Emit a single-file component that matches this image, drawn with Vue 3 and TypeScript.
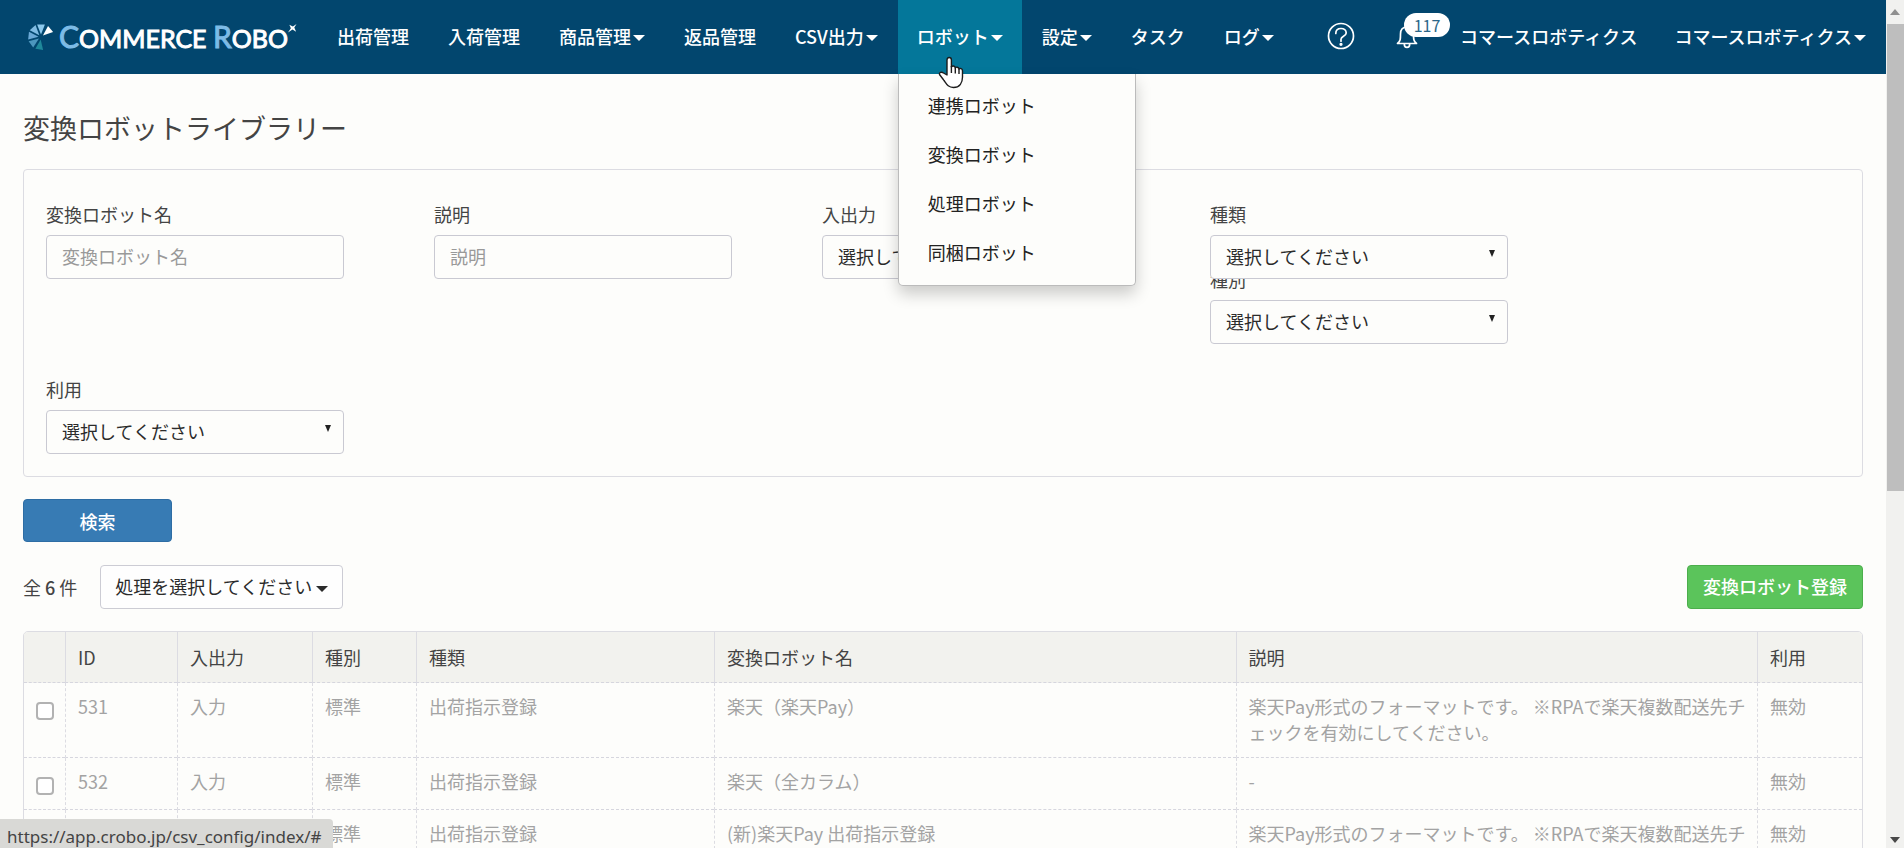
<script setup lang="ts">
interface NavItem {
  label: string
  caret?: boolean
  active?: boolean
}
interface Row {
  id: number
  io: string
  cls: string
  kind: string
  name: string
  note: string
  use: string
}

const nav: NavItem[] = [
  { label: '出荷管理' },
  { label: '入荷管理' },
  { label: '商品管理', caret: true },
  { label: '返品管理' },
  { label: 'CSV出力', caret: true },
  { label: 'ロボット', caret: true, active: true },
  { label: '設定', caret: true },
  { label: 'タスク' },
  { label: 'ログ', caret: true },
]
const menu: string[] = ['連携ロボット', '変換ロボット', '処理ロボット', '同梱ロボット']
const heads: string[] = ['ID', '入出力', '種別', '種類', '変換ロボット名', '説明', '利用']
const payNote = '楽天Pay形式のフォーマットです。 ※RPAで楽天複数配送先チェックを有効にしてください。'
const rows: Row[] = [
  { id: 531, io: '入力', cls: '標準', kind: '出荷指示登録', name: '楽天（楽天Pay）', note: payNote, use: '無効' },
  { id: 532, io: '入力', cls: '標準', kind: '出荷指示登録', name: '楽天（全カラム）', note: '-', use: '無効' },
  { id: 533, io: '入力', cls: '標準', kind: '出荷指示登録', name: '(新)楽天Pay 出荷指示登録', note: payNote, use: '無効' },
]
const petals = [
  { angle: -40, fill: '#ffffff' },
  { angle: -90, fill: '#8cc8ec' },
  { angle: -132, fill: '#7fbbe2' },
  { angle: -174, fill: '#6ba9d6' },
  { angle: -216, fill: '#4c96bd' },
  { angle: -262, fill: '#1f889a' },
]
</script>

<template>
  <div class="window" lang="ja">
    <div class="page">
      <header class="bar">
        <a class="logo" href="#" aria-label="Commerce Robo">
          <svg class="fan" viewBox="0 0 26 26" aria-hidden="true">
            <path
              v-for="p in petals"
              :key="p.angle"
              d="M2.5 0 L12.5 -3.9 L12.5 3.9 Z"
              :fill="p.fill"
              :transform="`translate(13 13) rotate(${p.angle})`"
            />
          </svg>
          <span class="word"><span class="big">C</span>OMMERCE <span class="big">R</span>OBO</span>
          <svg class="spark" viewBox="0 0 10 10" aria-hidden="true">
            <path d="M9.5 0 L7 4 L9 8.5 L5 6.2 L0 9.5 L3.2 4.6 L1.5 .8 L5.4 2.8 Z" fill="#fff" />
          </svg>
        </a>
        <nav class="nav">
          <div v-for="n in nav" :key="n.label" class="slot">
            <a class="item" :class="{ active: n.active }" href="#">{{ n.label }}<i v-if="n.caret" class="caret"></i></a>
            <div v-if="n.active" class="menu">
              <a v-for="m in menu" :key="m" href="#">{{ m }}</a>
            </div>
            <svg v-if="n.active" class="hand" viewBox="0 0 26 33" aria-hidden="true">
              <path
                d="M9 19 V4 C9 .6 13.4 .6 13.4 4 V11 C14 9.4 17 9.6 17.3 12 C18 10.6 20.8 11 21 13 C22 12 24.5 12.4 24.5 15 V21 C24.5 27 21.5 31.5 15.5 31.5 C10 31.5 8.5 28 6 24.5 C4.5 22 2.8 20.5 1.5 18.5 C.8 16.5 3.5 15.5 5.5 17 Z"
                fill="#fff"
                stroke="#1c1c1c"
                stroke-width="1.4"
                stroke-linejoin="round"
              />
              <path d="M13.4 10 V17 M17.3 12 V17.5 M21 13 V18" fill="none" stroke="#1c1c1c" stroke-width="1.4" />
            </svg>
          </div>
        </nav>
        <div class="tools">
          <a class="help" href="#" aria-label="ヘルプ">
            <svg viewBox="0 0 28 28" fill="none" stroke="#fff" stroke-width="1.7">
              <circle cx="14" cy="14" r="12.5" />
              <path d="M8.8 11.5 C8.8 8.3 11 6.5 14 6.5 C17 6.5 19.2 8.3 19.2 11 C19.2 14.2 14 14.4 14 17.2 V19.2" stroke-linecap="round" />
              <circle cx="14" cy="22.3" r=".8" fill="#fff" />
            </svg>
          </a>
          <a class="bell" href="#" aria-label="通知">
            <svg viewBox="0 0 22 26" fill="none" stroke="#fff" stroke-width="1.7">
              <path d="M1.5 20.5 H20.5 C17.5 18 17.5 16 17.5 11 C17.5 6.5 14.8 4 11 4 C7.2 4 4.5 6.5 4.5 11 C4.5 16 4.5 18 1.5 20.5 Z" stroke-linejoin="round" />
              <path d="M8.3 21 C8.3 25.6 13.7 25.6 13.7 21 M11 4 V1.5" />
            </svg>
            <span class="badge">117</span>
          </a>
          <a class="user" href="#">コマースロボティクス</a>
          <a class="user" href="#">コマースロボティクス<i class="caret"></i></a>
        </div>
      </header>

      <main class="main">
        <h1>変換ロボットライブラリー</h1>
        <form class="panel" @submit.prevent>
          <div class="col">
            <label for="f-name">変換ロボット名</label>
            <input id="f-name" type="text" placeholder="変換ロボット名" />
          </div>
          <div class="col">
            <label for="f-note">説明</label>
            <input id="f-note" type="text" placeholder="説明" />
          </div>
          <div class="col">
            <label for="f-io">入出力</label>
            <div class="pick">
              <select id="f-io"><option>選択してください</option></select>
            </div>
          </div>
          <div class="col">
            <label for="f-kind">種類</label>
            <div class="pick">
              <select id="f-kind"><option>選択してください</option></select>
            </div>
            <label class="tucked" for="f-cls">種別</label>
            <div class="pick">
              <select id="f-cls"><option>選択してください</option></select>
            </div>
          </div>
          <div class="col">
            <label for="f-use">利用</label>
            <div class="pick">
              <select id="f-use"><option>選択してください</option></select>
            </div>
          </div>
        </form>

        <button class="search" type="button">検索</button>

        <div class="actions">
          <span class="total">全 <b>6</b> 件</span>
          <button class="bulk" type="button">処理を選択してください<i class="caret"></i></button>
          <button class="add" type="button">変換ロボット登録</button>
        </div>

        <div class="frame">
          <table>
            <colgroup>
              <col class="w-check" /><col class="w-id" /><col class="w-io" /><col class="w-cls" />
              <col class="w-kind" /><col /><col /><col class="w-use" />
            </colgroup>
            <thead>
              <tr>
                <th></th>
                <th v-for="h in heads" :key="h">{{ h }}</th>
              </tr>
            </thead>
            <tbody>
              <tr v-for="r in rows" :key="r.id">
                <td class="tick"><input type="checkbox" :aria-label="`${r.id}`" /></td>
                <td>{{ r.id }}</td>
                <td>{{ r.io }}</td>
                <td>{{ r.cls }}</td>
                <td>{{ r.kind }}</td>
                <td>{{ r.name }}</td>
                <td>{{ r.note }}</td>
                <td>{{ r.use }}</td>
              </tr>
            </tbody>
          </table>
        </div>
      </main>
      <div class="status">https://app.crobo.jp/csv_config/index/#</div>
    </div>

    <div class="scroll" aria-hidden="true">
      <svg viewBox="0 0 10 6"><path d="M5 0 L10 6 H0 Z" fill="#8f8f8f" /></svg>
      <div class="thumb"></div>
      <svg viewBox="0 0 10 6"><path d="M0 0 H10 L5 6 Z" fill="#484848" /></svg>
    </div>
  </div>
</template>

<style>
body {
  margin: 0;
  overflow: hidden;
}
</style>

<style scoped>
* {
  box-sizing: border-box;
}
.window {
  display: flex;
  height: 100vh;
  overflow: hidden;
  background: #fdfdfb;
  color: #444;
  font: 18px/26px "Noto Sans CJK JP", sans-serif;
}
.page {
  position: relative;
  flex: 1;
  min-width: 0;
  overflow: hidden;
}
a {
  color: inherit;
  text-decoration: none;
}
.bar {
  display: flex;
  align-items: center;
  height: 74px;
  background: #02466e;
  color: #fff;
  font-weight: 500;
  white-space: nowrap;
}
.logo {
  display: flex;
  align-items: center;
  width: 300px;
  height: 74px;
  padding-left: 28px;
  flex: none;
}
.logo > * {
  flex: none;
}
.fan {
  width: 26px;
  height: 26px;
}
.word {
  margin-left: 5px;
  font: 25px/36px Lato, sans-serif;
  -webkit-text-stroke: 1px;
}
.big {
  color: #7dbbe6;
  font-size: 30px;
}
.spark {
  width: 9px;
  height: 9px;
  margin-bottom: 18px;
}
.nav {
  display: flex;
  gap: 1px;
  margin-left: 18px;
}
.slot {
  position: relative;
}
.item {
  display: flex;
  align-items: center;
  height: 74px;
  padding: 0 19px 2px;
}
.item.active {
  background: #04779a;
}
.caret {
  display: inline-block;
  margin: 3px 0 0 2px;
  border: 6px solid transparent;
  border-top-color: currentColor;
  border-bottom: 0;
  vertical-align: middle;
}
.menu {
  position: absolute;
  z-index: 5;
  top: 74px;
  left: 0;
  width: 238px;
  padding: 7px 0 8px;
  border: 1px solid #bbb;
  border-top: 0;
  border-radius: 0 0 5px 5px;
  background: #fdfdfb;
  box-shadow: 0 8px 16px rgba(0, 0, 0, 0.2);
  color: #222;
  font-weight: 400;
}
.menu a {
  display: block;
  padding: 0 29px;
  line-height: 49px;
}
.hand {
  position: absolute;
  z-index: 6;
  top: 56px;
  left: 40px;
  width: 26px;
  height: 33px;
}
.tools {
  display: flex;
  align-items: center;
  margin-left: auto;
  padding: 0 20px 2px 0;
}
.help,
.help svg {
  display: block;
  width: 28px;
  height: 28px;
}
.bell {
  position: relative;
  width: 22px;
  height: 26px;
  margin-left: 41px;
}
.bell svg {
  display: block;
  width: 22px;
  height: 26px;
}
.badge {
  position: absolute;
  top: -10px;
  left: 8px;
  width: 46px;
  border-radius: 12px;
  background: #fff;
  color: #2c6688;
  font-size: 16px;
  font-weight: 400;
  line-height: 24px;
  text-align: center;
}
.user {
  display: flex;
  align-items: center;
  margin-left: 37px;
}
.bell + .user {
  margin-left: 42px;
}
.main {
  padding: 34px 23px 0;
}
h1 {
  margin: 0 0 21px;
  font-size: 27px;
  font-weight: 400;
  line-height: 40px;
}
.panel {
  display: flex;
  flex-wrap: wrap;
  gap: 33px 90px;
  padding: 32px 22px 22px;
  border: 1px solid #dcdce2;
  border-radius: 4px;
}
.col {
  width: 298px;
}
label {
  display: block;
  margin-bottom: 9px;
  line-height: 24px;
}
.tucked {
  margin-top: -12px;
}
.col input,
select {
  display: block;
  width: 100%;
  height: 44px;
  padding: 0 15px 2px;
  border: 1px solid #c9c9d2;
  border-radius: 4px;
  background: #fdfdfb;
  color: #2b2b2b;
  font: inherit;
}
.col input::placeholder {
  color: #999;
}
select {
  appearance: none;
}
.pick {
  position: relative;
}
.pick::after {
  position: absolute;
  top: 15px;
  right: 13px;
  border: 3px solid transparent;
  border-top: 7px solid #222;
  border-bottom: 0;
  content: "";
  pointer-events: none;
}
button {
  border-radius: 4px;
  font: inherit;
  cursor: pointer;
}
.search {
  display: block;
  width: 149px;
  height: 43px;
  margin-top: 22px;
  border: 1px solid #2e6da4;
  background: #377bb4;
  color: #fff;
  font-weight: 500;
}
.actions {
  display: flex;
  align-items: center;
  height: 44px;
  margin-top: 23px;
}
.total b {
  font-weight: 500;
}
.bulk {
  height: 44px;
  margin-left: 23px;
  padding: 0 14px 2px;
  border: 1px solid #ccccd4;
  background: #fefefe;
  color: #2b2b2b;
}
.bulk .caret {
  margin: 0 0 0 4px;
}
.add {
  height: 44px;
  margin-left: auto;
  padding: 0 15px 2px;
  border: 1px solid #4cae4c;
  background: #5bc45b;
  color: #fff;
  font-weight: 500;
}
.frame {
  margin-top: 22px;
  border: 1px solid #dcdce2;
  border-radius: 5px;
  overflow: hidden;
}
table {
  width: 100%;
  border-spacing: 0;
  table-layout: fixed;
}
.w-check { width: 41px; }
.w-id { width: 112px; }
.w-io { width: 135px; }
.w-cls { width: 104px; }
.w-kind { width: 298px; }
.w-use { width: 105px; }
th,
td {
  height: 52px;
  padding: 10px 8px 12px 12px;
  border-left: 1px solid #dcdce2;
  border-bottom: 1px dashed #d6d6de;
  line-break: anywhere;
  text-align: left;
  vertical-align: top;
}
td {
  border-left-style: dashed;
}
th:first-child,
td:first-child {
  border-left: 0;
}
th {
  height: 51px;
  padding: 12px 8px 10px 12px;
  background: #f2f2ee;
  font-weight: 400;
}
td {
  color: #a3a3a3;
}
.tick {
  padding: 19px 0 0 12px;
}
.tick input {
  display: block;
  width: 18px;
  height: 18px;
  margin: 0;
  border: 2px solid #b2b2b2;
  border-radius: 4px;
  background: #fff;
  appearance: none;
}
.status {
  position: absolute;
  z-index: 4;
  bottom: 0;
  left: 0;
  padding: 6px 11px 0 7px;
  border-radius: 0 4px 0 0;
  background: #d9d9d6;
  color: #444;
  font: 17px/23px "Noto Sans", sans-serif;
}
.scroll {
  display: flex;
  flex: none;
  flex-direction: column;
  align-items: center;
  width: 18px;
  padding: 9px 0 5px;
  background: #f1f1ef;
}
.scroll svg {
  width: 10px;
  height: 6px;
}
.thumb {
  flex: 0 0 56%;
  width: 17px;
  margin: 9px 0 auto;
  background: #bebebe;
}
</style>
